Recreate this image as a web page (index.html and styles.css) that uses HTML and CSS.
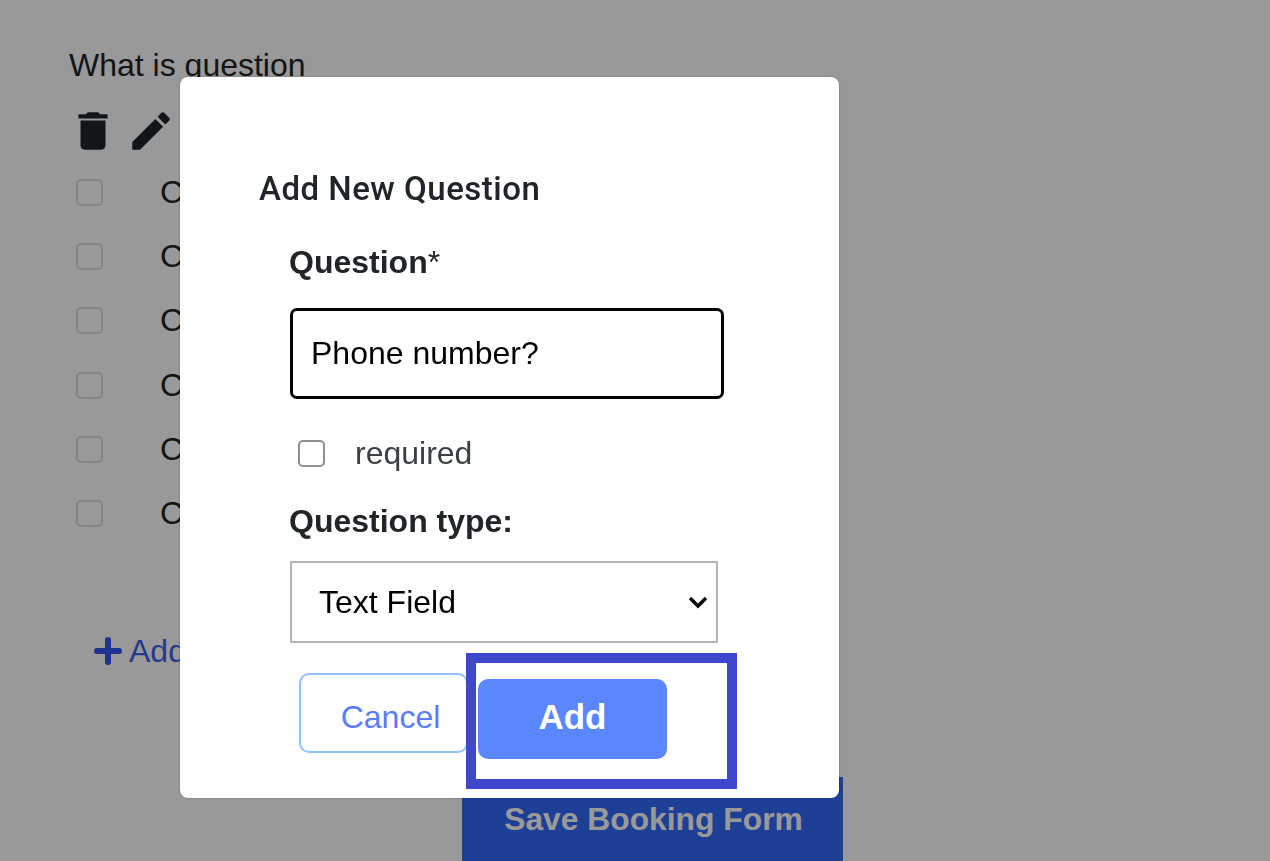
FILE: index.html
```html
<!DOCTYPE html>
<html lang="en">
<head>
<meta charset="utf-8">
<title>Add New Question</title>
<link rel="stylesheet" href="styles.css">
</head>
<body>
<main class="page">
  <h2 class="q-title">What is question</h2>
  <div class="q-actions">
    <svg class="q-icon" viewBox="0 0 24 24"><path d="M6 19c0 1.1.9 2 2 2h8c1.1 0 2-.9 2-2V7H6v12zM19 4h-3.5l-1-1h-5l-1 1H5v2h14V4z"/></svg>
    <svg class="q-icon" viewBox="0 0 24 24"><path d="M3 17.25V21h3.75L17.81 9.94l-3.75-3.75L3 17.25zM20.71 7.04c.39-.39.39-1.02 0-1.41l-2.34-2.34c-.39-.39-1.02-.39-1.41 0l-1.83 1.83 3.75 3.75 1.83-1.83z"/></svg>
  </div>
  <ul class="options">
    <li class="option"><span class="bg-check"></span><span>C</span></li>
    <li class="option"><span class="bg-check"></span><span>C</span></li>
    <li class="option"><span class="bg-check"></span><span>C</span></li>
    <li class="option"><span class="bg-check"></span><span>C</span></li>
    <li class="option"><span class="bg-check"></span><span>C</span></li>
    <li class="option"><span class="bg-check"></span><span>C</span></li>
  </ul>
  <a class="add-link"><svg class="plus" viewBox="0 0 28 28"><path d="M11 2.500a3 2.500 0 0 1 6 0V11h8.500a2.500 3 0 0 1 0 6H17v8.500a3 2.500 0 0 1-6 0V17H2.500a2.500 3 0 0 1 0-6H11z"/></svg>Add</a>
  <div class="save-row"><button class="save-btn" type="button">Save Booking Form</button></div>
</main>
<div class="overlay"></div>
<section class="modal">
  <h3 class="modal-title">Add New Question</h3>
  <form class="form">
    <label class="field-label"><b>Question</b>*</label>
    <input class="text-input" type="text" value="Phone number?">
    <label class="check-row"><span class="check"></span>required</label>
    <label class="field-label type-label"><b>Question type:</b></label>
    <div class="select-box">
      <span>Text Field</span>
      <svg class="chevron" viewBox="0 0 20 14"><path d="M2 3l8 8 8-8" fill="none" stroke="#000" stroke-width="3.400"/></svg>
    </div>
    <div class="buttons">
      <button class="btn-cancel" type="button">Cancel</button>
      <button class="btn-add" type="button">Add</button>
    </div>
  </form>
</section>
<div class="highlight"></div>
</body>
</html>
```
FILE: styles.css
```css
* { box-sizing: border-box; }
html, body { margin: 0; height: 100%; }
body {
  width: 1270px;
  height: 861px;
  overflow: hidden;
  background: #fff;
  font-family: "Liberation Sans", Arial, sans-serif;
  color: #212529;
  position: relative;
}
.page { padding: 46px 0 0 69px; height: 861px; display: flex; flex-direction: column; }
.q-title { margin: 0; font-size: 32px; line-height: 38px; font-weight: 400; }
.q-actions { display: flex; gap: 8px; margin: 22px 0 0 -1px; }
.q-icon { width: 50px; height: 50px; fill: #212529; display: block; }
.options { list-style: none; margin: 4px 0 0 7px; padding: 0; display: flex; flex-direction: column; }
.option { display: flex; align-items: center; height: 64.3px; font-size: 32px; gap: 57px; }
.bg-check { width: 27px; height: 27px; border: 2px solid #dcdcdc; border-radius: 5px; background: #fff; flex: none; }
.add-link { display: flex; align-items: center; gap: 7px; margin: 85px 0 0 25px; font-size: 32px; line-height: 40px; color: #3f5fe8; }
.plus { width: 28px; height: 28px; fill: #3358f0; }
.save-row { margin: 106px 0 0 393px; }
.save-btn { width: 381px; height: 90px; padding: 0 0 4px 2px; border: 0; background: #3369fb; color: #fff; font: 700 31.800px "Liberation Sans", Arial, sans-serif; display: block; }
.overlay { position: fixed; inset: 0; background: rgba(0,0,0,.4); }
.modal {
  position: absolute; left: 180px; top: 77px; width: 659px; height: 721px;
  background: #fff; border-radius: 8px; padding: 92px 0 0 79px;
  box-shadow: 0 0 2px rgba(0,0,0,.35);
}
.modal-title { margin: 0; font: 500 33px/40px Roboto, sans-serif; letter-spacing: .5px; color: #212529; }
.form { padding: 34px 0 0 30px; display: flex; flex-direction: column; align-items: flex-start; }
.field-label { font-size: 32px; line-height: 38px; color: #212529; font-weight: 400; }
.field-label b { font-weight: 700; }
.text-input {
  width: 434px; height: 91px; margin: 27px 0 0 1px; padding: 0 0 0 18px;
  border: 3px solid #000; border-radius: 7px; outline: 0; background: #fff;
  font: 400 32px "Liberation Sans", Arial, sans-serif; color: #000;
}
.check-row { display: flex; align-items: center; gap: 30px; margin: 34px 0 0 9px; height: 40px; font-size: 32px; color: #3a3f44; }
.check { width: 27px; height: 27px; border: 2px solid #8f8f8f; border-radius: 5px; background: #fff; flex: none; }
.type-label { margin-top: 29px; }
.select-box {
  width: 428px; height: 82px; margin: 21px 0 0 1px; padding: 0 8px 0 27px;
  border: 2px solid #b4b4b4; display: flex; align-items: center; justify-content: space-between;
  font-size: 32px; color: #000; background: #fff;
}
.chevron { width: 20px; height: 14px; display: block; }
.buttons { display: flex; align-items: flex-start; margin: 30px 0 0 10px; gap: 10px; }
.btn-cancel {
  width: 169px; height: 80px; border: 2px solid #90c0ff; border-radius: 10px; background: #fff;
  color: #5a7cff; font: 400 32px "Liberation Sans", Arial, sans-serif; padding: 8px 0 0 14px;
}
.btn-add {
  width: 189px; height: 80px; margin-top: 6px; border: 0; border-radius: 10px; background: #5a86ff;
  color: #fff; font: 700 35px "Liberation Sans", Arial, sans-serif; padding: 0 0 4px;
}
.highlight { position: absolute; left: 466px; top: 653px; width: 271px; height: 136px; border: 10px solid #3f48cc; }
```
